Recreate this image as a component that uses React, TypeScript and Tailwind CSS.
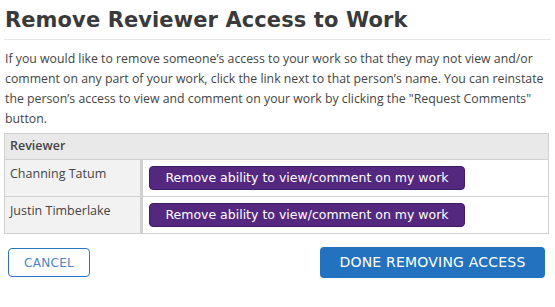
const reviewers = ['Channing Tatum', 'Justin Timberlake'];

export default function App() {
  return (
    <div className="w-[555px] h-[307px] bg-white px-[4px] pt-[6px]" style={{ fontFamily: '"Open Sans", sans-serif' }}>
      <h1
        className="pl-[1px] text-[21px] leading-[28px] font-bold tracking-[0.1px] text-[#3a3a3a]"
        style={{ fontFamily: '"DejaVu Sans", sans-serif' }}
      >
        Remove Reviewer Access to Work
      </h1>
      <div className="mt-[5px] w-[547px] border-t border-[#e6e6e6]" />
      <p className="mt-[9px] pl-[1px] text-[12.3px] leading-[20px] text-[#444]">
        If you would like to remove someone’s access to your work so that they may not view and/or comment on any
        part of your work, click the link next to that person’s name. You can reinstate the person’s access to view and
        comment on your work by clicking the "Request Comments" button.
      </p>
      <table className="mt-[4px] w-[545px] border-collapse border border-[#d0d0d0] text-[12.5px] text-[#444]">
        <thead>
          <tr className="bg-[#e9e9e9]">
            <th colSpan={2} className="h-[26px] px-[5px] text-left font-semibold">
              Reviewer
            </th>
          </tr>
        </thead>
        <tbody>
          {reviewers.map((name) => (
            <tr key={name} className="border-t border-[#d0d0d0]">
              <td className="h-[37px] w-[137px] bg-[#f2f2f2] border-r-[3px] border-[#d0d0d0] px-[5px] pt-[5px] align-top">
                {name}
              </td>
              <td className="pl-[6px] align-middle">
                <button
                  className="flex h-[24px] w-[316px] items-center justify-center rounded-[4px] border border-[#3f1e66] bg-[#54287f] text-[12.5px] text-white"
                  style={{ fontFamily: '"DejaVu Sans", sans-serif' }}
                >
                  Remove ability to view/comment on my work
                </button>
              </td>
            </tr>
          ))}
        </tbody>
      </table>
      <div className="mt-[13px] flex items-center justify-between pl-[4px] pr-[6px]" style={{ fontFamily: '"DejaVu Sans", sans-serif' }}>
        <button className="h-[29px] w-[82px] rounded-[4px] border border-[#2a73c2] text-[12px] tracking-[0.3px] text-[#4a84c6]">
          CANCEL
        </button>
        <button className="h-[31px] w-[225px] rounded-[4px] bg-[#2272c0] text-[14px] tracking-[0.2px] text-white">
          DONE REMOVING ACCESS
        </button>
      </div>
    </div>
  );
}
